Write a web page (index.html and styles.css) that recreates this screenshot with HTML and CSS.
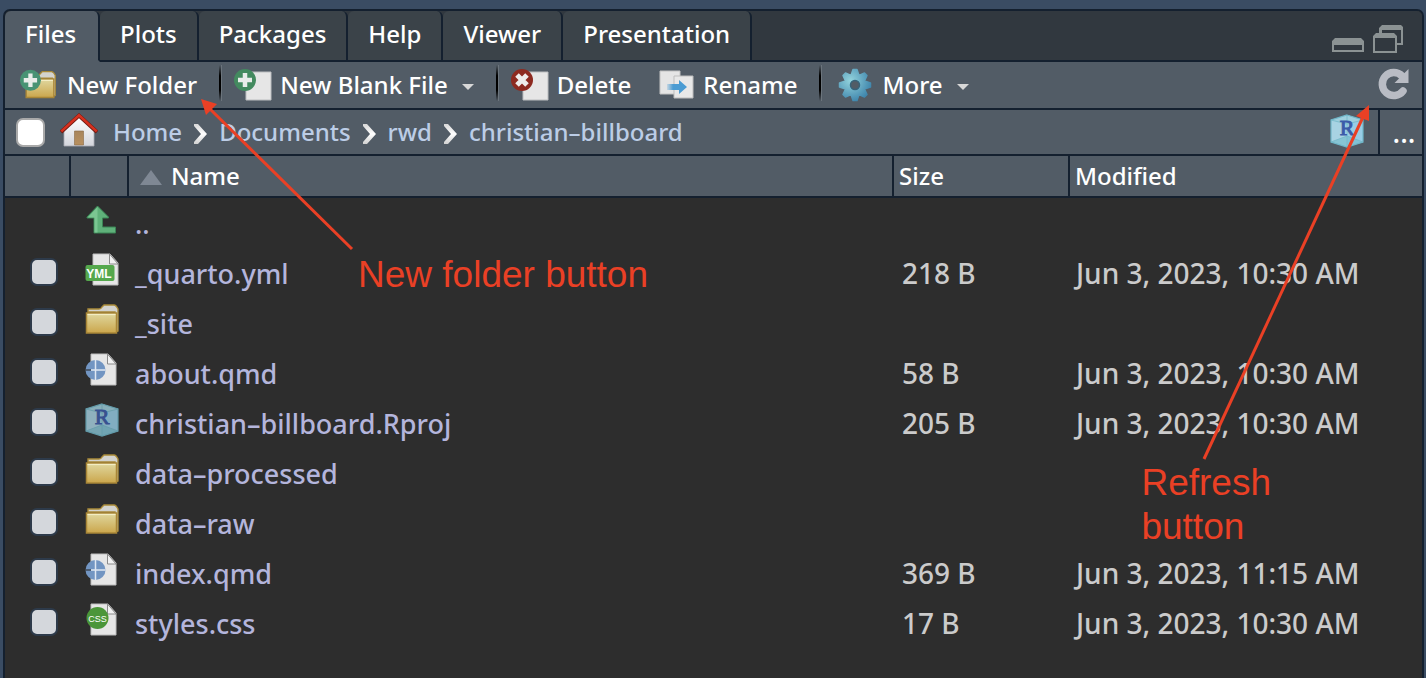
FILE: index.html
```html
<!DOCTYPE html>
<html lang="en">
<head>
<meta charset="utf-8">
<title>Files</title>
<link rel="stylesheet" href="styles.css">
</head>
<body>
<svg class="defs" aria-hidden="true">
  <defs>
    <linearGradient id="g-folder" x1="0" y1="0" x2="0" y2="1"><stop offset="0" stop-color="#e0d8a0"/><stop offset="1" stop-color="#cba64c"/></linearGradient>
    <linearGradient id="g-wall" x1="0" y1="0" x2="0" y2="1"><stop offset="0" stop-color="#ffffff"/><stop offset="1" stop-color="#d3d5dc"/></linearGradient>
    <linearGradient id="g-door" x1="0" y1="0" x2="0" y2="1"><stop offset="0" stop-color="#a8855c"/><stop offset="1" stop-color="#b8905f"/></linearGradient>
    <radialGradient id="g-gear" cx=".35" cy=".35" r=".7"><stop offset="0" stop-color="#93d3dc"/><stop offset="1" stop-color="#3f86ad"/></radialGradient>
    <linearGradient id="g-arrow" x1="0" y1="0" x2="1" y2="0"><stop offset="0" stop-color="#4b9cd3" stop-opacity=".2"/><stop offset=".3" stop-color="#4b9cd3"/></linearGradient>
    <linearGradient id="g-chev" x1="0" y1="0" x2="0" y2="1"><stop offset="0" stop-color="#d6d6d6"/><stop offset=".5" stop-color="#ffffff"/><stop offset="1" stop-color="#d0d0d0"/></linearGradient>
    <symbol id="folder" viewBox="0 0 36 32">
      <path d="M3 8V5h11q2 0 3-2l2-2h10q2 0 4 4v22l-3 1V8z" fill="#d3d3cf" stroke="#a98a38" stroke-width="1.4"/>
      <path d="M1.5 9h30v20h-30z" fill="url(#g-folder)" stroke="#a98637" stroke-width="1.5"/>
      <path d="M2.5 10.500h28" stroke="#f3edc4" stroke-width="1.2"/>
    </symbol>
    <symbol id="page" viewBox="0 0 28 33">
      <path d="M1 1h17l8 9v22H1z" fill="#e6e6e6" stroke="#bdbdbd"/>
      <path d="M17.500 1v10H26z" fill="#f1f1f1" stroke="#8a8a8a"/>
    </symbol>
    <symbol id="rproj" viewBox="0 0 34 34">
      <path d="M17 1l16 5v22l-16 5L1 28V6z" fill="#a8d3e3"/>
      <path d="M17 1v32l16-5V6z" fill="#98cde6"/>
      <path d="M17 1l16 5-16 4L1 6z" fill="#9fd0de"/>
      <path d="M1 28l16-6 16 6-16 5z" fill="#74bccc" opacity=".65"/>
      <path d="M17 1v32M1 6l16 4 16-4M1 28l16-6 16 6" fill="none" stroke="#74b8c8" stroke-width=".8"/>
      <path d="M17 1l16 5v22l-16 5L1 28V6z" fill="none" stroke="#6fb6c8" stroke-width="1.2"/>
      <text x="17" y="21" text-anchor="middle" class="r-letter">R</text>
    </symbol>
    <symbol id="qmd" viewBox="0 0 36 34">
      <use href="#page" x="5" y="0" width="28" height="33"/>
      <circle cx="10.500" cy="17" r="10" fill="#7295c2"/>
      <path d="M10.500 7v20M6 17h14.500" stroke="#dfe7f2" stroke-width="1.500"/>
      <path d="M.5 17H6" stroke="#222" stroke-width="1"/>
    </symbol>
    <symbol id="chevron" viewBox="0 0 15 22">
      <path d="M1 1h4l9 10-9 10H1v-2l7-8-7-8z" fill="url(#g-chev)"/>
    </symbol>
  </defs>
</svg>

<main class="pane">
  <nav class="tabs" role="tablist" aria-label="Pane tabs">
    <button class="tab active" role="tab" aria-selected="true">Files</button>
    <button class="tab" role="tab">Plots</button>
    <button class="tab" role="tab">Packages</button>
    <button class="tab" role="tab">Help</button>
    <button class="tab" role="tab">Viewer</button>
    <button class="tab" role="tab">Presentation</button>
    <div class="window-controls">
      <button class="icon-button" aria-label="Minimize"><svg width="32" height="15" viewBox="0 0 32 15"><path fill-rule="evenodd" d="M3 0h26l3 3v11H0V3zM2 7v5h28V7z" fill="#8b9293"/></svg></button>
      <button class="icon-button" aria-label="Maximize"><svg width="31" height="28" viewBox="0 0 31 28"><path fill-rule="evenodd" d="M9 0h19l2 2v18h-7v-2h5V5H9v3H6V3z" fill="#8b9293"/><path fill-rule="evenodd" d="M3 8h18l3 3v17H0V11zM2 13v13h20V13z" fill="#8b9293"/></svg></button>
    </div>
  </nav>

  <div class="toolbar" role="toolbar">
    <button class="tool">
      <svg width="40" height="32" viewBox="0 0 42 32"><use href="#folder" x="6" y="1" width="35" height="31"/><circle cx="12" cy="11" r="11" fill="#489374"/><path d="M12 4v14M5 11h14" stroke="#e8ece9" stroke-width="4.500"/></svg>
      <span>New Folder</span>
    </button>
    <span class="divider"></span>
    <button class="tool">
      <svg width="38" height="32" viewBox="0 0 38 32"><path d="M12 3h25v28H12z" fill="#e6e6e6" stroke="#bcbec0"/><circle cx="11" cy="11" r="11" fill="#438a5f"/><path d="M11 4v14M4 11h14" stroke="#e8ece9" stroke-width="4.500"/></svg>
      <span>New Blank File</span>
      <i class="caret"></i>
    </button>
    <span class="divider"></span>
    <button class="tool">
      <svg width="38" height="32" viewBox="0 0 38 32"><path d="M12 3h25v28H12z" fill="#e6e6e6" stroke="#bcbec0"/><circle cx="11" cy="11" r="11" fill="#8d2a20"/><path d="M6 6l10 10M16 6L6 16" stroke="#eeeceb" stroke-width="5"/></svg>
      <span>Delete</span>
    </button>
    <button class="tool">
      <svg width="36" height="30" viewBox="0 0 36 30"><path d="M1 1h20v23H1z" fill="#e5e5e5" stroke="#c2c2c2"/><path d="M15 6h19v22H15z" fill="#e8e8e8" stroke="#bdbdbd"/><path d="M8 14h12v-4l8 7-8 7v-4H8z" fill="url(#g-arrow)"/></svg>
      <span>Rename</span>
    </button>
    <span class="divider"></span>
    <button class="tool">
      <svg width="40" height="36" viewBox="-21 -18 40 36"><path fill="url(#g-gear)" stroke="url(#g-gear)" stroke-width="1.500" stroke-linejoin="round" fill-rule="evenodd" d="M-4-9.500L-2-15.500H2L4-9.500 9.500-12 12-9.500 9.500-4 15.500-2V2L9.500 4 12 9.500 9.500 12 4 9.500 2 15.500H-2L-4 9.500-9.500 12-12 9.500-9.500 4-15.500 2V-2L-9.500-4-12-9.500-9.500-12zM0-4.500A4.500 4.500 0 1 0 0 4.500 4.500 4.500 0 1 0 0-4.500z"/><circle r="4.500" fill="#525c66" stroke="#37637a" stroke-width="1.500"/></svg>
      <span>More</span>
      <i class="caret"></i>
    </button>
    <button class="icon-button refresh" aria-label="Refresh"><svg width="32" height="32" viewBox="0 0 32 32"><path d="M25 23A11.500 11.500 0 1 1 24 8" fill="none" stroke="#b9bcc4" stroke-width="7.500" stroke-linecap="round"/><path d="M30.500 1v14H16.500z" fill="#b9bcc4"/></svg></button>
  </div>

  <div class="path-bar">
    <input type="checkbox" class="check check-all" aria-label="Select all">
    <svg class="home" width="38" height="34" viewBox="0 0 38 34"><path d="M4 17L19 4l15 13v16H4z" fill="url(#g-wall)" stroke="#a9abb4" stroke-width=".8"/><path d="M14.500 18h9v14h-9z" fill="url(#g-door)" stroke="#8a6a44" stroke-width=".6"/><path d="M1 19L19 2.500 37 19" fill="none" stroke="#701b12" stroke-width="3.800"/><path d="M1.300 18.400L19 2.200 36.700 18.400" fill="none" stroke="#d5311f" stroke-width="2.600"/></svg>
    <nav class="crumbs" aria-label="Path">
      <a href="#">Home</a>
      <svg width="15" height="22"><use href="#chevron"/></svg>
      <a href="#">Documents</a>
      <svg width="15" height="22"><use href="#chevron"/></svg>
      <a href="#">rwd</a>
      <svg width="15" height="22"><use href="#chevron"/></svg>
      <a href="#">christian–billboard</a>
    </nav>
    <button class="icon-button project" aria-label="Project"><svg width="34" height="34"><use href="#rproj"/></svg></button>
    <button class="browse" aria-label="Browse">...</button>
  </div>

  <table class="files">
    <colgroup><col class="c-check"><col class="c-icon"><col><col class="c-size"><col class="c-modified"></colgroup>
    <thead>
      <tr><th></th><th></th><th class="name"><i class="sort"></i>Name</th><th>Size</th><th>Modified</th></tr>
    </thead>
    <tbody>
      <tr><td></td><td class="icon"><svg width="34" height="30" viewBox="0 0 34 30"><path d="M12.500 1l11 11v1h-6v9h13v6H9V13H2v-1z" fill="#5fb17a" stroke="#3b8455"/><path d="M12.500 2v25.500h-3V12.500H3z" fill="#7bc692"/></svg></td><td><a href="#">..</a></td><td></td><td></td></tr>
      <tr><td><input type="checkbox" class="check" aria-label="_quarto.yml"></td><td class="icon"><svg width="36" height="34" viewBox="0 0 36 34"><use href="#page" x="7" y="0" width="28" height="33"/><rect x=".5" y="12" width="29" height="16" rx="2" fill="#55a84d"/><text x="14" y="24.500" text-anchor="middle" class="yml">YML</text></svg></td><td><a href="#">_quarto.yml</a></td><td>218 B</td><td>Jun 3, 2023, 10:30 AM</td></tr>
      <tr><td><input type="checkbox" class="check" aria-label="_site"></td><td class="icon"><svg width="36" height="32"><use href="#folder"/></svg></td><td><a href="#">_site</a></td><td></td><td></td></tr>
      <tr><td><input type="checkbox" class="check" aria-label="about.qmd"></td><td class="icon"><svg width="36" height="34"><use href="#qmd"/></svg></td><td><a href="#">about.qmd</a></td><td>58 B</td><td>Jun 3, 2023, 10:30 AM</td></tr>
      <tr><td><input type="checkbox" class="check" aria-label="christian-billboard.Rproj"></td><td class="icon"><svg class="dim" width="34" height="34"><use href="#rproj"/></svg></td><td><a href="#">christian–billboard.Rproj</a></td><td>205 B</td><td>Jun 3, 2023, 10:30 AM</td></tr>
      <tr><td><input type="checkbox" class="check" aria-label="data-processed"></td><td class="icon"><svg width="36" height="32"><use href="#folder"/></svg></td><td><a href="#">data–processed</a></td><td></td><td></td></tr>
      <tr><td><input type="checkbox" class="check" aria-label="data-raw"></td><td class="icon"><svg width="36" height="32"><use href="#folder"/></svg></td><td><a href="#">data–raw</a></td><td></td><td></td></tr>
      <tr><td><input type="checkbox" class="check" aria-label="index.qmd"></td><td class="icon"><svg width="36" height="34"><use href="#qmd"/></svg></td><td><a href="#">index.qmd</a></td><td>369 B</td><td>Jun 3, 2023, 11:15 AM</td></tr>
      <tr><td><input type="checkbox" class="check" aria-label="styles.css"></td><td class="icon"><svg width="36" height="34" viewBox="0 0 36 34"><use href="#page" x="5" y="0" width="28" height="33"/><circle cx="12.500" cy="15" r="11" fill="#4b9639"/><text x="12.500" y="18.500" text-anchor="middle" class="css">CSS</text></svg></td><td><a href="#">styles.css</a></td><td>17 B</td><td>Jun 3, 2023, 10:30 AM</td></tr>
    </tbody>
  </table>
</main>

<svg class="pointer pointer-folder" width="160" height="160" viewBox="0 0 160 160" aria-hidden="true"><path d="M152 150L9 9" stroke="#ea4025" stroke-width="3"/><path d="M1 0l16 5-11 11z" fill="#ea4025"/></svg>
<p class="note note-folder">New folder button</p>
<svg class="pointer pointer-refresh" width="176" height="360" viewBox="0 0 176 360" aria-hidden="true"><path d="M8 359L167 17" stroke="#ea4025" stroke-width="3"/><path d="M173 5v16l-13-5z" fill="#ea4025"/></svg>
<p class="note note-refresh">Refresh<br>button</p>
</body>
</html>
```
FILE: styles.css
```css
* { box-sizing: border-box; }

body {
  margin: 0;
  min-height: 100vh;
  padding: 9px 2px 0 3px;
  display: flex;
  position: relative;
  overflow: hidden;
  background: #3a4c63;
  color: #fff;
  font-family: "Lucida Grande", "Noto Sans", sans-serif;
  font-size: 24px;
  line-height: 34px;
}

button {
  margin: 0;
  padding: 0;
  border: 0;
  background: none;
  color: inherit;
  font: inherit;
}

a { color: inherit; text-decoration: none; }
svg { flex: none; }
.defs { position: absolute; width: 0; height: 0; }

.pane {
  flex: 1;
  min-width: 0;
  border: 2px solid #14202f;
  border-bottom: 0;
  border-radius: 7px 7px 0 0;
  background: #2d2d2d;
  overflow: hidden;
  font-weight: 500;
}

/* Tabs */
.tabs {
  display: flex;
  height: 51px;
  background: #31383f;
}
.tab {
  padding: 0 20px 4px;
  background: #3b4349;
  border-right: 2px solid #14202f;
  border-bottom: 2px solid #14202f;
  border-radius: 6px 6px 0 0;
}
.tab.active {
  padding-right: 22px;
  background: #525c66;
  border-bottom-color: #525c66;
}
.window-controls {
  flex: 1;
  display: flex;
  justify-content: flex-end;
  align-items: flex-end;
  gap: 9px;
  padding: 0 18px 7px 0;
  border-bottom: 2px solid #14202f;
}
.icon-button { display: flex; flex: none; }

/* Toolbar */
.toolbar {
  display: flex;
  align-items: center;
  height: 48px;
  padding: 0 12px 0 14px;
  background: #525c66;
  border-bottom: 2px solid #14202f;
}
.tool {
  display: flex;
  align-items: center;
  gap: 8px;
  white-space: nowrap;
}
.tool + .tool { margin-left: 28px; }
.divider {
  width: 3px;
  height: 36px;
  margin: 0 12px 4px 22px;
  background: linear-gradient(#0000, #000 30%, #000 70%, #0000);
  border-right: 1px solid #6b747c;
}
.caret {
  margin: 4px 0 0 6px;
  border: 6px solid transparent;
  border-top-color: #d8d8d8;
  border-bottom: 0;
}
.refresh { margin: 0 0 2px auto; }

/* Path */
.path-bar {
  display: flex;
  align-items: center;
  height: 46px;
  padding-left: 11px;
  background: #525c66;
  border-bottom: 2px solid #14202f;
  color: #bccde6;
}
.check {
  appearance: none;
  display: block;
  width: 28px;
  height: 28px;
  margin: 0;
  border: 2px solid #2d3a4a;
  border-radius: 7px;
  background: #d4d7dc;
}
.check-all {
  width: 29px;
  height: 29px;
  border-color: #a9a9a9;
  background: #fff;
}
.home { margin: 0 15px 4px; }
.crumbs {
  flex: 1;
  display: flex;
  align-items: center;
  gap: 11px;
  white-space: nowrap;
}
.crumbs svg { margin-top: 4px; }
.project { margin: 0 14px 2px 0; }
.browse {
  align-self: stretch;
  width: 44px;
  padding-left: 6px;
  border-left: 2px solid #14202f;
  color: #fff;
  font-size: 28px;
}

/* File list */
.files {
  width: 100%;
  table-layout: fixed;
  border-collapse: separate;
  border-spacing: 0;
}
.c-check { width: 66px; }
.c-icon { width: 58px; }
.c-size { width: 176px; }
.c-modified { width: 352px; }
.files th {
  height: 42px;
  padding: 0 5px;
  background: #525c66;
  border-right: 2px solid #14202f;
  border-bottom: 2px solid #14202f;
  font-weight: 500;
  text-align: left;
  white-space: nowrap;
}
.files th:last-child { border-right: 0; }
.files th.name { padding-left: 11px; }
.sort {
  display: inline-block;
  margin-right: 9px;
  border: 11px solid transparent;
  border-bottom: 15px solid #7f8894;
  border-top: 0;
}
.files td {
  height: 50px;
  padding: 0 0 0 6px;
  color: #cbcbcb;
  font-size: 28px;
  vertical-align: middle;
  white-space: nowrap;
}
.files td:nth-child(1) { padding: 0 0 2px 25px; }
.files td.icon { padding: 0 0 6px 14px; }
.files td:nth-child(4) { padding-left: 8px; }
.icon svg { display: block; }
.files td a { color: #b4b5dc; font-size: 27px; }
.dim { opacity: .8; }

.r-letter { font: 400 22px "Liberation Serif", serif; fill: #3b5ba9; stroke: #3b5ba9; stroke-width: 1px; }
.yml { font: 700 12px "Liberation Sans", sans-serif; fill: #fff; }
.css { font: 400 9px "Liberation Sans", sans-serif; fill: #fff; }

/* Annotations over the pane */
.pointer, .note { position: absolute; pointer-events: none; }
.note {
  margin: 0;
  color: #ea4025;
  font: 37px/44px "Liberation Sans", sans-serif;
}
.pointer-folder { left: 200px; top: 99px; }
.note-folder { left: 358px; top: 253px; }
.pointer-refresh { right: 54px; top: 100px; }
.note-refresh { right: 155px; top: 461px; }
```
